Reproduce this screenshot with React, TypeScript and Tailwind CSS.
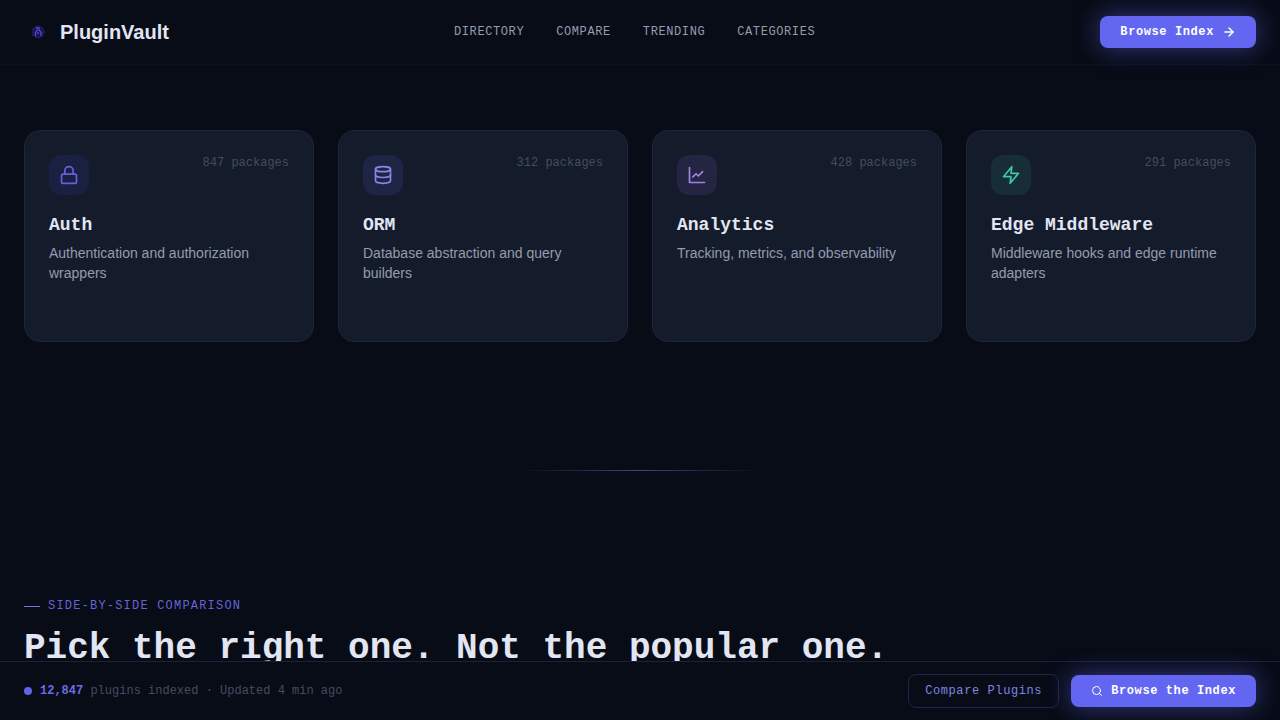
import { ReactNode } from "react";
import clsx from "clsx";
import { ArrowRight, Database, Lock, Search } from "lucide-react";

const NAV_LINKS = ["Directory", "Compare", "Trending", "Categories"];

const ChartIcon = () => (
  <svg
    width="20"
    height="20"
    viewBox="0 0 24 24"
    fill="none"
    stroke="currentColor"
    strokeWidth="2"
    strokeLinecap="round"
    strokeLinejoin="round"
  >
    <path d="M3 3v18h18" />
    <path d="m18.7 8-5.1 5.2-2.8-2.7L7 14.3" />
  </svg>
);

const BoltIcon = () => (
  <svg
    width="20"
    height="20"
    viewBox="0 0 24 24"
    fill="none"
    stroke="currentColor"
    strokeWidth="2"
    strokeLinecap="round"
    strokeLinejoin="round"
  >
    <polygon points="13 2 3 14 12 14 11 22 21 10 12 10 13 2" />
  </svg>
);

const LogoMark = () => (
  <svg width="28" height="28" viewBox="0 0 28 28" fill="none">
    <circle cx="14" cy="14" r="6" fill="#1c1750" />
    <circle cx="14" cy="14" r="6" stroke="#2d2775" strokeDasharray="2 1.5" />
    <path
      d="M11.5 18v-3.5l2-2.5h1.5l2 2.5V18M12 10.5l2-1 2 1.5M14 14v2"
      stroke="#5b4be0"
      strokeWidth="1.2"
    />
  </svg>
);

type Category = {
  name: string;
  description: string;
  packages: number;
  icon: ReactNode;
  iconClass: string;
};

const CATEGORIES: Category[] = [
  {
    name: "Auth",
    description: "Authentication and authorization wrappers",
    packages: 847,
    icon: <Lock size={20} />,
    iconClass: "bg-[#192042] text-[#6563dc]",
  },
  {
    name: "ORM",
    description: "Database abstraction and query builders",
    packages: 312,
    icon: <Database size={20} />,
    iconClass: "bg-[#1d2444] text-[#8488e8]",
  },
  {
    name: "Analytics",
    description: "Tracking, metrics, and observability",
    packages: 428,
    icon: <ChartIcon />,
    iconClass: "bg-[#242543] text-[#9d86e0]",
  },
  {
    name: "Edge Middleware",
    description: "Middleware hooks and edge runtime adapters",
    packages: 291,
    icon: <BoltIcon />,
    iconClass: "bg-[#172d37] text-[#3fc9a0]",
  },
];

const PrimaryButton = ({ children }: { children: ReactNode }) => (
  <button className="flex items-center gap-2 rounded-lg bg-[#6366f1] px-5 py-2 text-xs font-bold tracking-wider text-white shadow-[0_0_24px_rgba(99,102,241,0.5)]">
    {children}
  </button>
);

const Header = () => (
  <header className="border-b border-[#0d111f]">
    <div className="flex h-16 items-center justify-between px-6">
      <a
        href="#"
        className="flex items-center gap-2 font-['Liberation_Sans',sans-serif] text-xl font-bold text-[#e2e5f2]"
      >
        <LogoMark />
        PluginVault
      </a>
      <nav className="flex gap-8">
        {NAV_LINKS.map((link) => (
          <a
            key={link}
            href="#"
            className="text-xs tracking-wider text-[#949cae] uppercase"
          >
            {link}
          </a>
        ))}
      </nav>
      <PrimaryButton>
        Browse Index
        <ArrowRight size={14} strokeWidth={2.5} />
      </PrimaryButton>
    </div>
  </header>
);

const CategoryCard = ({ category }: { category: Category }) => (
  <article className="min-h-[212px] rounded-2xl border border-[#1d2536] bg-[#141b2b] p-6">
    <div className="mb-4 flex items-start justify-between">
      <div
        className={clsx(
          "flex h-10 w-10 items-center justify-center rounded-xl",
          category.iconClass
        )}
      >
        {category.icon}
      </div>
      <span className="text-xs text-[#434d5e]">
        {category.packages} packages
      </span>
    </div>
    <h3 className="text-lg font-bold text-[#e2e5f2]">{category.name}</h3>
    <p className="mt-1 font-['Liberation_Sans',sans-serif] text-sm text-[#949cae]">
      {category.description}
    </p>
  </article>
);

const StatusBar = () => (
  <footer className="fixed inset-x-0 bottom-0 flex items-center justify-between border-t border-[#1d203b] bg-[#080c17] px-6 py-3">
    <div className="flex items-center gap-2 text-xs text-[#434d5e]">
      <span className="h-2 w-2 rounded-full bg-[#6563e4]" />
      <p>
        <strong className="text-[#6f6ae6]">12,847</strong> plugins indexed ·
        Updated 4 min ago
      </p>
    </div>
    <div className="flex items-center gap-3">
      <button className="rounded-lg border border-[#22254a] px-4 py-2 text-xs tracking-wider text-[#8084e0]">
        Compare Plugins
      </button>
      <PrimaryButton>
        <Search size={12} />
        Browse the Index
      </PrimaryButton>
    </div>
  </footer>
);

const App = () => {
  return (
    <div className="min-h-screen bg-[#080c17] font-['Liberation_Mono',monospace]">
      <Header />
      <main className="pb-12">
        <section className="grid grid-cols-4 gap-6 px-6 pt-[65px] pb-32">
          {CATEGORIES.map((category) => (
            <CategoryCard key={category.name} category={category} />
          ))}
        </section>
        <div className="mx-auto h-px w-60 bg-linear-to-r from-transparent via-[#41437f] to-transparent" />
        <section className="px-6 pt-[127px]">
          <div className="mb-4 flex items-center gap-2 text-xs tracking-widest text-[#6663d6] uppercase">
            <span className="h-px w-4 bg-[#7a79c4]" />
            Side-by-side comparison
          </div>
          <h2 className="text-4xl leading-[38px] font-bold text-[#e2e5f2]">
            Pick the right one. Not the popular one.
          </h2>
        </section>
      </main>
      <StatusBar />
    </div>
  );
};

export default App;
